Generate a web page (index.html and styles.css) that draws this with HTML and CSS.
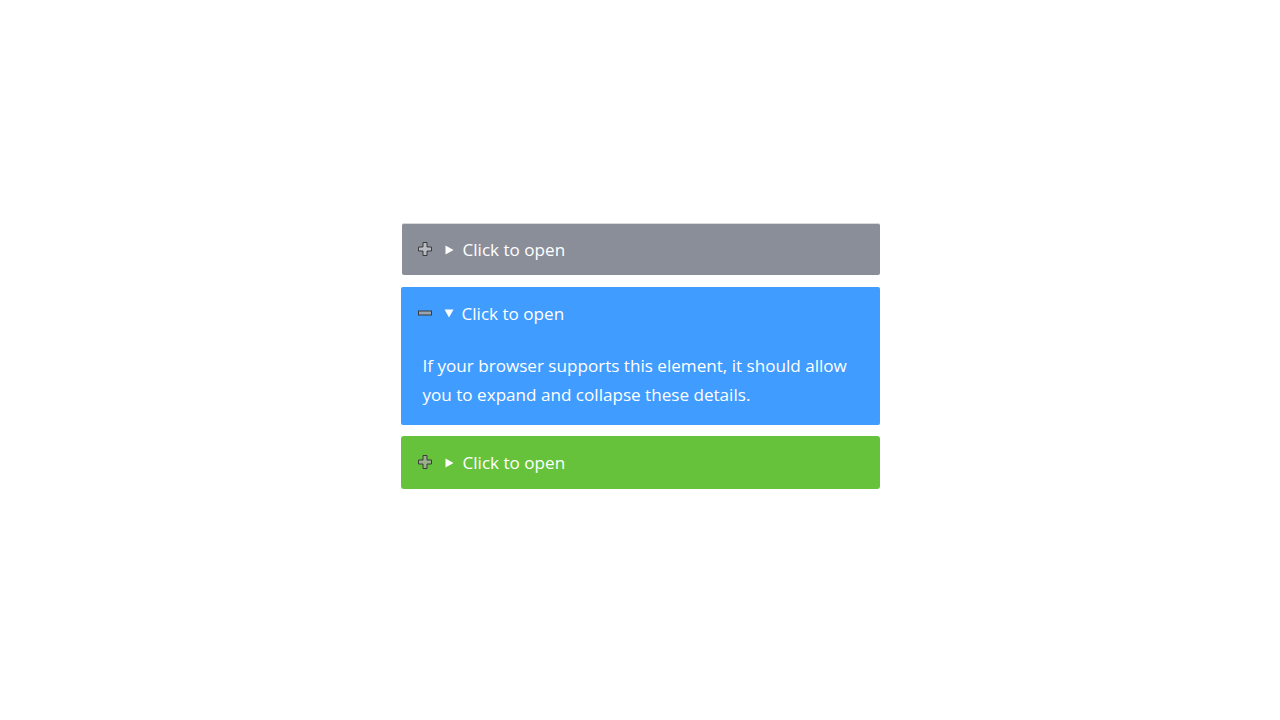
FILE: index.html
```html
<!DOCTYPE html>
<html>
<head>
<meta charset="utf-8">
<link rel="stylesheet" href="styles.css">
</head>
<body>
<main class="stack">
  <details class="panel panel-gray">
    <summary class="summary">
      <svg class="ico" width="14" height="14" viewBox="0 0 14 14"><path d="M5 0.5h4v4.5h4.5v4H9v4.5H5V9H0.5V5H5z" fill="#b9bcc2" stroke="#3a3a3a" stroke-width="1"/></svg>
      <svg class="tri" width="9" height="10" viewBox="0 0 9 10"><path d="M0.5 0.5L8.5 5L0.5 9.5z" fill="#fff"/></svg>
      <span class="label">Click to open</span>
    </summary>
  </details>
  <details class="panel panel-blue" open>
    <summary class="summary">
      <svg class="ico" width="14" height="14" viewBox="0 0 14 14"><rect x="0.5" y="5" width="13" height="4" fill="#9aa4b0" stroke="#3a3a3a" stroke-width="1"/></svg>
      <svg class="tri tri-down" width="10" height="9" viewBox="0 0 10 9"><path d="M0.5 0.5L9.5 0.5L5 8.5z" fill="#fff"/></svg>
      <span class="label">Click to open</span>
    </summary>
    <p class="body">If your browser supports this element, it should allow you to expand and collapse these details.</p>
  </details>
  <details class="panel panel-green">
    <summary class="summary">
      <svg class="ico" width="14" height="14" viewBox="0 0 14 14"><path d="M5 0.5h4v4.5h4.5v4H9v4.5H5V9H0.5V5H5z" fill="#9ab08a" stroke="#3a3a3a" stroke-width="1"/></svg>
      <svg class="tri" width="9" height="10" viewBox="0 0 9 10"><path d="M0.5 0.5L8.5 5L0.5 9.5z" fill="#fff"/></svg>
      <span class="label">Click to open</span>
    </summary>
  </details>
</main>
</body>
</html>
```
FILE: styles.css
```css
html, body {
  margin: 0;
  padding: 0;
  background: #ffffff;
}
body {
  font-family: "Open Sans", "Liberation Sans", sans-serif;
  color: #ffffff;
}
.stack {
  width: 479px;
  margin: 223px auto 0;
  display: flex;
  flex-direction: column;
}
.panel {
  border-radius: 2px;
}
.panel-gray {
  background: #8a8e99;
  border-top: 1px solid #d8d9dc;
  margin-left: 1px;
}
.panel-blue {
  background: #409cff;
  margin-top: 12px;
}
.panel-green {
  background: #66c23a;
  border-radius: 3px;
  margin-top: 11px;
}
.summary {
  list-style: none;
  display: flex;
  align-items: center;
  height: 53px;
  padding-left: 17px;
  cursor: pointer;
}
.summary::-webkit-details-marker {
  display: none;
}
.panel-gray .summary {
  height: 51px;
  padding-left: 16px;
}
.ico {
  flex: none;
  margin-right: 13px;
  position: relative;
  top: -1px;
}
.tri {
  flex: none;
  margin-right: 9px;
}
.tri-down {
  margin-left: -1px;
  margin-right: 8px;
}
.label {
  font-size: 17.1px;
  line-height: 24px;
}
.body {
  margin: 0;
  padding: 12px 22px 16px;
  font-size: 17.1px;
  line-height: 28.5px;
}
```
